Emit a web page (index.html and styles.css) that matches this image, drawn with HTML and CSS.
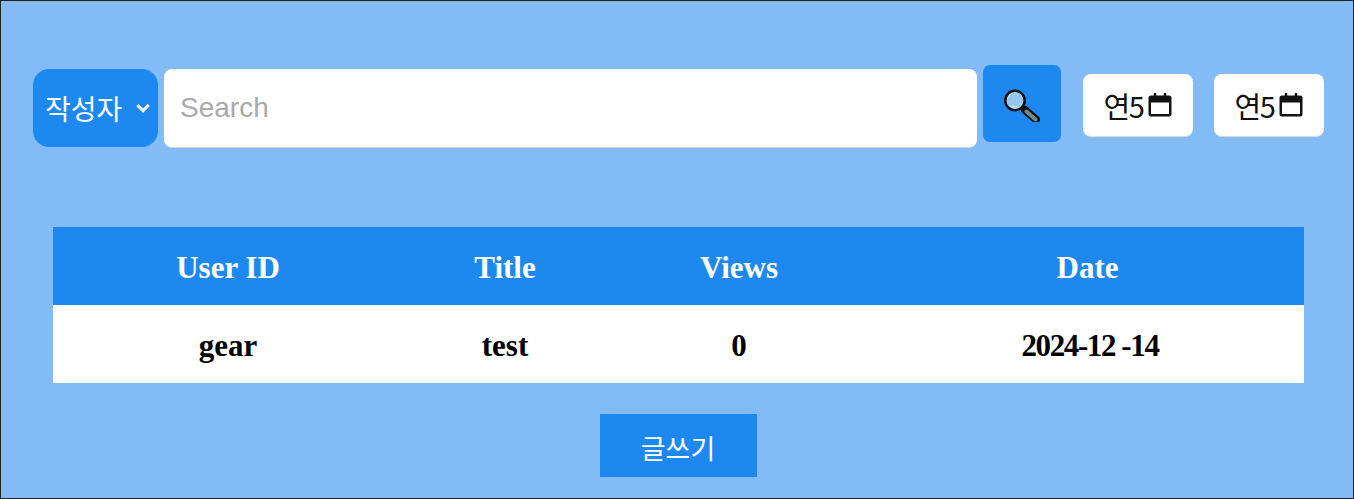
FILE: index.html
```html
<!DOCTYPE html>
<html lang="ko">
<head>
    <meta charset="UTF-8">
    <meta name="viewport" content="width=device-width, initial-scale=1.0">
    <title>게시판</title>
    <link rel="stylesheet" href="styles.css">
</head>
<body>

<div class="container">
    <form class="search-row">
        <div class="search-type">
            <span>작성자</span>
            <svg class="chevron" viewBox="0 0 14 10"><path d="M1.800 1.800l5.200 5.200 5.200-5.200" fill="none" stroke="#fff" stroke-width="2.800"/></svg>
        </div>
        <div class="search-input">Search</div>
        <button type="button" class="search-btn">
            <svg viewBox="0 0 36 36" width="36" height="36">
                <path d="M21 24l11 9.500" stroke="#111" stroke-width="8" stroke-linecap="round"/>
                <path d="M22.500 25.500l9 8" stroke="#76898a" stroke-width="4" stroke-linecap="round"/>
                <circle cx="11" cy="14.500" r="9.700" fill="#b5daf5" stroke="#111" stroke-width="2.600"/>
                <path d="M4 19a9 9 0 0 1 12-11.500l1.500 2a9 9 0 0 1-2 11z" fill="#94c8f0"/>
            </svg>
        </button>
        <div class="date-box">
            <span class="date-text">연5</span>
            <svg class="cal" viewBox="0 0 24 24"><path d="M7 0v4M17 0v4" stroke="#111" stroke-width="2.400"/><path d="M3 2.500h18a2.500 2.500 0 0 1 2.500 2.500v16a2.500 2.500 0 0 1-2.500 2.500H3A2.500 2.500 0 0 1 .5 21V5A2.500 2.500 0 0 1 3 2.500zm0 7V21h18V9.500z" fill="#111" fill-rule="evenodd"/></svg>
        </div>
        <div class="date-box">
            <span class="date-text">연5</span>
            <svg class="cal" viewBox="0 0 24 24"><path d="M7 0v4M17 0v4" stroke="#111" stroke-width="2.400"/><path d="M3 2.500h18a2.500 2.500 0 0 1 2.500 2.500v16a2.500 2.500 0 0 1-2.500 2.500H3A2.500 2.500 0 0 1 .5 21V5A2.500 2.500 0 0 1 3 2.500zm0 7V21h18V9.500z" fill="#111" fill-rule="evenodd"/></svg>
        </div>
    </form>

    <table class="board">
        <colgroup>
            <col class="col-user">
            <col class="col-title">
            <col class="col-views">
            <col class="col-date">
        </colgroup>
        <thead>
            <tr>
                <th>User ID</th>
                <th>Title</th>
                <th>Views</th>
                <th>Date</th>
            </tr>
        </thead>
        <tbody>
            <tr>
                <td>gear</td>
                <td>test</td>
                <td>0</td>
                <td class="date-cell">2024-12 -14</td>
            </tr>
        </tbody>
    </table>

    <div class="write-row">
        <button type="button" class="write-btn">글쓰기</button>
    </div>
</div>

</body>
</html>
```

FILE: styles.css
```css
* {
    box-sizing: border-box;
    margin: 0;
    padding: 0;
}

html, body {
    height: 499px;
    overflow: hidden;
}

.container {
    width: 1354px;
    height: 499px;
    background-color: #82bbf6;
    border: 1px solid #222;
    padding: 0 28px 0 32px;
    font-family: "Noto Sans CJK KR", "Liberation Sans", sans-serif;
}

.search-row {
    display: flex;
    align-items: flex-start;
    height: 162px;
    padding-top: 64px;
}

.search-type {
    width: 125px;
    height: 78px;
    margin-top: 4px;
    background-color: #1e88f1;
    border-radius: 16px;
    color: white;
    font-size: 28px;
    line-height: 76px;
    display: flex;
    align-items: center;
    padding-left: 12px;
    gap: 13px;
}

.chevron {
    width: 16px;
    height: 11px;
    flex-shrink: 0;
}

.search-input {
    width: 813px;
    height: 79px;
    margin: 4px 6px 0 6px;
    padding-left: 16px;
    background: white;
    border-radius: 8px;
    border-bottom: 1px solid #c8d4e0;
    color: #a9a9a9;
    font-family: "Liberation Sans", Arial, sans-serif;
    font-size: 28px;
    line-height: 78px;
}

.search-btn {
    width: 78px;
    height: 77px;
    background-color: #1e88f1;
    border: none;
    border-radius: 7px;
    display: flex;
    align-items: center;
    justify-content: center;
}

.date-box {
    width: 110px;
    height: 63px;
    margin: 9px 0 0 22px;
    background: white;
    border-radius: 8px;
    border-bottom: 1px solid #d6dce4;
    display: flex;
    align-items: center;
    justify-content: center;
    color: #111;
    font-size: 29px;
}

.date-box + .date-box {
    margin-left: 21px;
}

.date-text {
    letter-spacing: -1.500px;
}

.cal {
    width: 24px;
    height: 24px;
    margin-left: 5px;
}

.board {
    width: 1251px;
    margin: 64px 0 0 20px;
    border-collapse: collapse;
    table-layout: fixed;
    background: white;
    font-family: "Liberation Serif", "Times New Roman", serif;
    font-size: 31px;
    font-weight: bold;
}

.col-user { width: 350px; }
.col-title { width: 204px; }
.col-views { width: 264px; }
.col-date { width: 433px; }

th, td {
    height: 78px;
    padding-top: 3px;
    text-align: center;
    vertical-align: middle;
}

th {
    background-color: #1e88f1;
    color: white;
}

td {
    color: black;
}

.date-cell {
    padding-left: 5px;
    letter-spacing: -1.400px;
}

.write-row {
    display: flex;
    justify-content: center;
    margin-top: 31px;
    padding-right: 2px;
}

.write-btn {
    width: 157px;
    height: 63px;
    padding-top: 3px;
    background-color: #1e88f1;
    border: none;
    color: white;
    font-family: "Noto Sans CJK KR", sans-serif;
    font-size: 27px;
}
```
